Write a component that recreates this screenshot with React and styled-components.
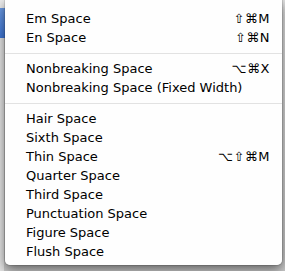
import React from "react";
import styled, { createGlobalStyle } from "styled-components";

const GlobalStyle = createGlobalStyle`
  html, body {
    margin: 0;
    padding: 0;
    background: #d9d9d9;
  }
`;

const sections = [
  [
    { label: "Em Space", keys: "⇧⌘M" },
    { label: "En Space", keys: "⇧⌘N" },
  ],
  [
    { label: "Nonbreaking Space", keys: "⌥⌘X" },
    { label: "Nonbreaking Space (Fixed Width)" },
  ],
  [
    { label: "Hair Space" },
    { label: "Sixth Space" },
    { label: "Thin Space", keys: "⌥⇧⌘M" },
    { label: "Quarter Space" },
    { label: "Third Space" },
    { label: "Punctuation Space" },
    { label: "Figure Space" },
    { label: "Flush Space" },
  ],
];

const App = () => {
  return (
    <>
      <GlobalStyle />
      <Desktop>
        <Sidebar>
          <SidebarTop />
          <Selection />
          <SidebarRest />
        </Sidebar>
        <Menu>
          {sections.map((items, i) => (
            <React.Fragment key={i}>
              {i > 0 && <Separator />}
              {items.map((item) => (
                <MenuItem key={item.label}>
                  <Label>{item.label}</Label>
                  {item.keys && <Keys>{item.keys}</Keys>}
                </MenuItem>
              ))}
            </React.Fragment>
          ))}
        </Menu>
      </Desktop>
    </>
  );
};

export default App;

const Desktop = styled.div`
  display: flex;
  width: 285px;
  height: 271px;
  overflow: hidden;
  background: linear-gradient(#e2e2e2, #c9c9c9);
`;

const Sidebar = styled.div`
  width: 5px;
  display: flex;
  flex-direction: column;
`;

const SidebarTop = styled.div`
  height: 8px;
  background: #ececec;
`;

const Selection = styled.div`
  height: 30px;
  background: linear-gradient(#6b9be6, #3f77d8);
`;

const SidebarRest = styled.div`
  flex: 1;
  background: #e4e4e4;
  border-right: 1px solid #c8c8c8;
`;

const Menu = styled.div`
  width: 277px;
  height: 256px;
  padding: 9px 0 0;
  background: rgba(255, 255, 255, 0.97);
  border-radius: 0 0 5px 5px;
  box-shadow: 0 0 0 1px rgba(0, 0, 0, 0.1), 0 4px 12px rgba(0, 0, 0, 0.55);
  font-family: "DejaVu Sans", "Liberation Sans", sans-serif;
  font-size: 13px;
  color: #000;
`;

const MenuItem = styled.div`
  display: flex;
  align-items: center;
  justify-content: space-between;
  height: 19px;
  line-height: 19px;
  padding: 0 12px 0 21px;
`;

const Label = styled.span`
  white-space: nowrap;
`;

const Keys = styled.span`
  white-space: nowrap;
  letter-spacing: 0.5px;
`;

const Separator = styled.div`
  height: 1px;
  margin: 6px 0 5px;
  background: #e2e2e2;
`;
